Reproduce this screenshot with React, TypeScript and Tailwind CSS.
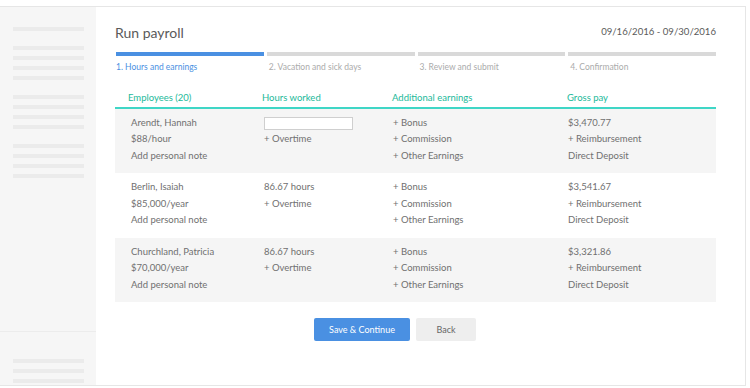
import React from "react";

type Employee = {
  name: string;
  rate: string;
  hours: string | null;
  gross: string;
};

const employees: Employee[] = [
  { name: "Arendt, Hannah", rate: "$88/hour", hours: null, gross: "$3,470.77" },
  { name: "Berlin, Isaiah", rate: "$85,000/year", hours: "86.67 hours", gross: "$3,541.67" },
  { name: "Churchland, Patricia", rate: "$70,000/year", hours: "86.67 hours", gross: "$3,321.86" },
];

const steps = ["1. Hours and earnings", "2. Vacation and sick days", "3. Review and submit", "4. Confirmation"];

const sideGroups = [1, 4, 4, 4];

const Sidebar: React.FC = () => (
  <div className="w-[96px] shrink-0 bg-[#f6f6f6] flex flex-col">
    <div className="flex-1 pt-[20px] px-[13px] flex flex-col gap-[15px]">
      {sideGroups.map((n, gi) => (
        <div key={gi} className="flex flex-col gap-[6px]">
          {Array.from({ length: n }).map((_, i) => (
            <div key={i} className="h-[4px] w-[71px] bg-[#ebebeb]" />
          ))}
        </div>
      ))}
    </div>
    <div className="h-[54px] border-t border-[#ececec] pt-[27px] px-[13px] flex flex-col gap-[6px]">
      {[0, 1, 2].map((i) => (
        <div key={i} className="h-[4px] w-[71px] bg-[#ebebeb]" />
      ))}
    </div>
  </div>
);

const Line: React.FC<{ children?: React.ReactNode }> = ({ children }) => (
  <div className="h-[16.5px] flex items-center whitespace-nowrap">{children}</div>
);

export default function App() {
  return (
    <div className="w-[750px] h-[388px] bg-white pt-[6px] font-['Lato',sans-serif] text-[#707070]">
      <div className="w-[746px] h-[380px] border-t border-b border-r border-[#e6e6e6] flex">
        <Sidebar />
        <div className="flex-1 pl-[20px] pr-[29px] pt-[15px]">
          <div className="flex items-center justify-between h-[20px]">
            <h1 className="text-[14px] text-[#5a5a5a] -ml-[1px]">Run payroll</h1>
            <span className="text-[9.6px] text-[#5a5a5a]">09/16/2016 - 09/30/2016</span>
          </div>
          <div className="mt-[10px] grid grid-cols-4 gap-[3px]">
            {steps.map((s, i) => (
              <div key={s} className="flex flex-col">
                <div className={i === 0 ? "h-[4px] bg-[#4a90e2]" : "h-[4px] bg-[#d9d9d9]"} />
                <span
                  className={
                    i === 0
                      ? "mt-[5px] text-[8.5px] text-[#4a90e2] whitespace-nowrap"
                      : "mt-[5px] text-[8.5px] text-[#ababab] whitespace-nowrap pl-[2px]"
                  }
                >
                  {s}
                </span>
              </div>
            ))}
          </div>
          <div className="mt-[18.5px] -ml-[1px]">
            <div className="grid grid-cols-[134px_130px_175px_1fr] pl-[13px] pb-[3px] leading-[12px] text-[9.5px] text-[#22b99a]">
              <span>Employees (20)</span>
              <span>Hours worked</span>
              <span>Additional earnings</span>
              <span>Gross pay</span>
            </div>
            <div className="h-[1.5px] bg-[#3fd6c6]" />
            {employees.map((e, i) => (
              <div
                key={e.name}
                className={
                  i % 2 === 0
                    ? "h-[64.5px] pt-[6px] pl-[16px] grid grid-cols-[133px_129px_175px_1fr] text-[9.5px] bg-[#f5f5f5]"
                    : "h-[64.5px] pt-[6px] pl-[16px] grid grid-cols-[133px_129px_175px_1fr] text-[9.5px]"
                }
              >
                <div>
                  <Line>{e.name}</Line>
                  <Line>{e.rate}</Line>
                  <Line>Add personal note</Line>
                </div>
                <div>
                  <Line>
                    {e.hours ?? (
                      <div className="w-[89px] h-[13px] bg-white border border-[#cfcfcf]" />
                    )}
                  </Line>
                  <Line>+ Overtime</Line>
                </div>
                <div>
                  <Line>+ Bonus</Line>
                  <Line>+ Commission</Line>
                  <Line>+ Other Earnings</Line>
                </div>
                <div>
                  <Line>{e.gross}</Line>
                  <Line>+ Reimbursement</Line>
                  <Line>Direct Deposit</Line>
                </div>
              </div>
            ))}
          </div>
          <div className="mt-[16px] flex justify-center gap-[6px] pr-[42px]">
            <button className="w-[96px] h-[23px] rounded-[2px] bg-[#4a90e2] text-white text-[9px]">
              Save &amp; Continue
            </button>
            <button className="w-[60px] h-[23px] rounded-[2px] bg-[#eeeeee] text-[#666] text-[9px]">
              Back
            </button>
          </div>
        </div>
      </div>
    </div>
  );
}
